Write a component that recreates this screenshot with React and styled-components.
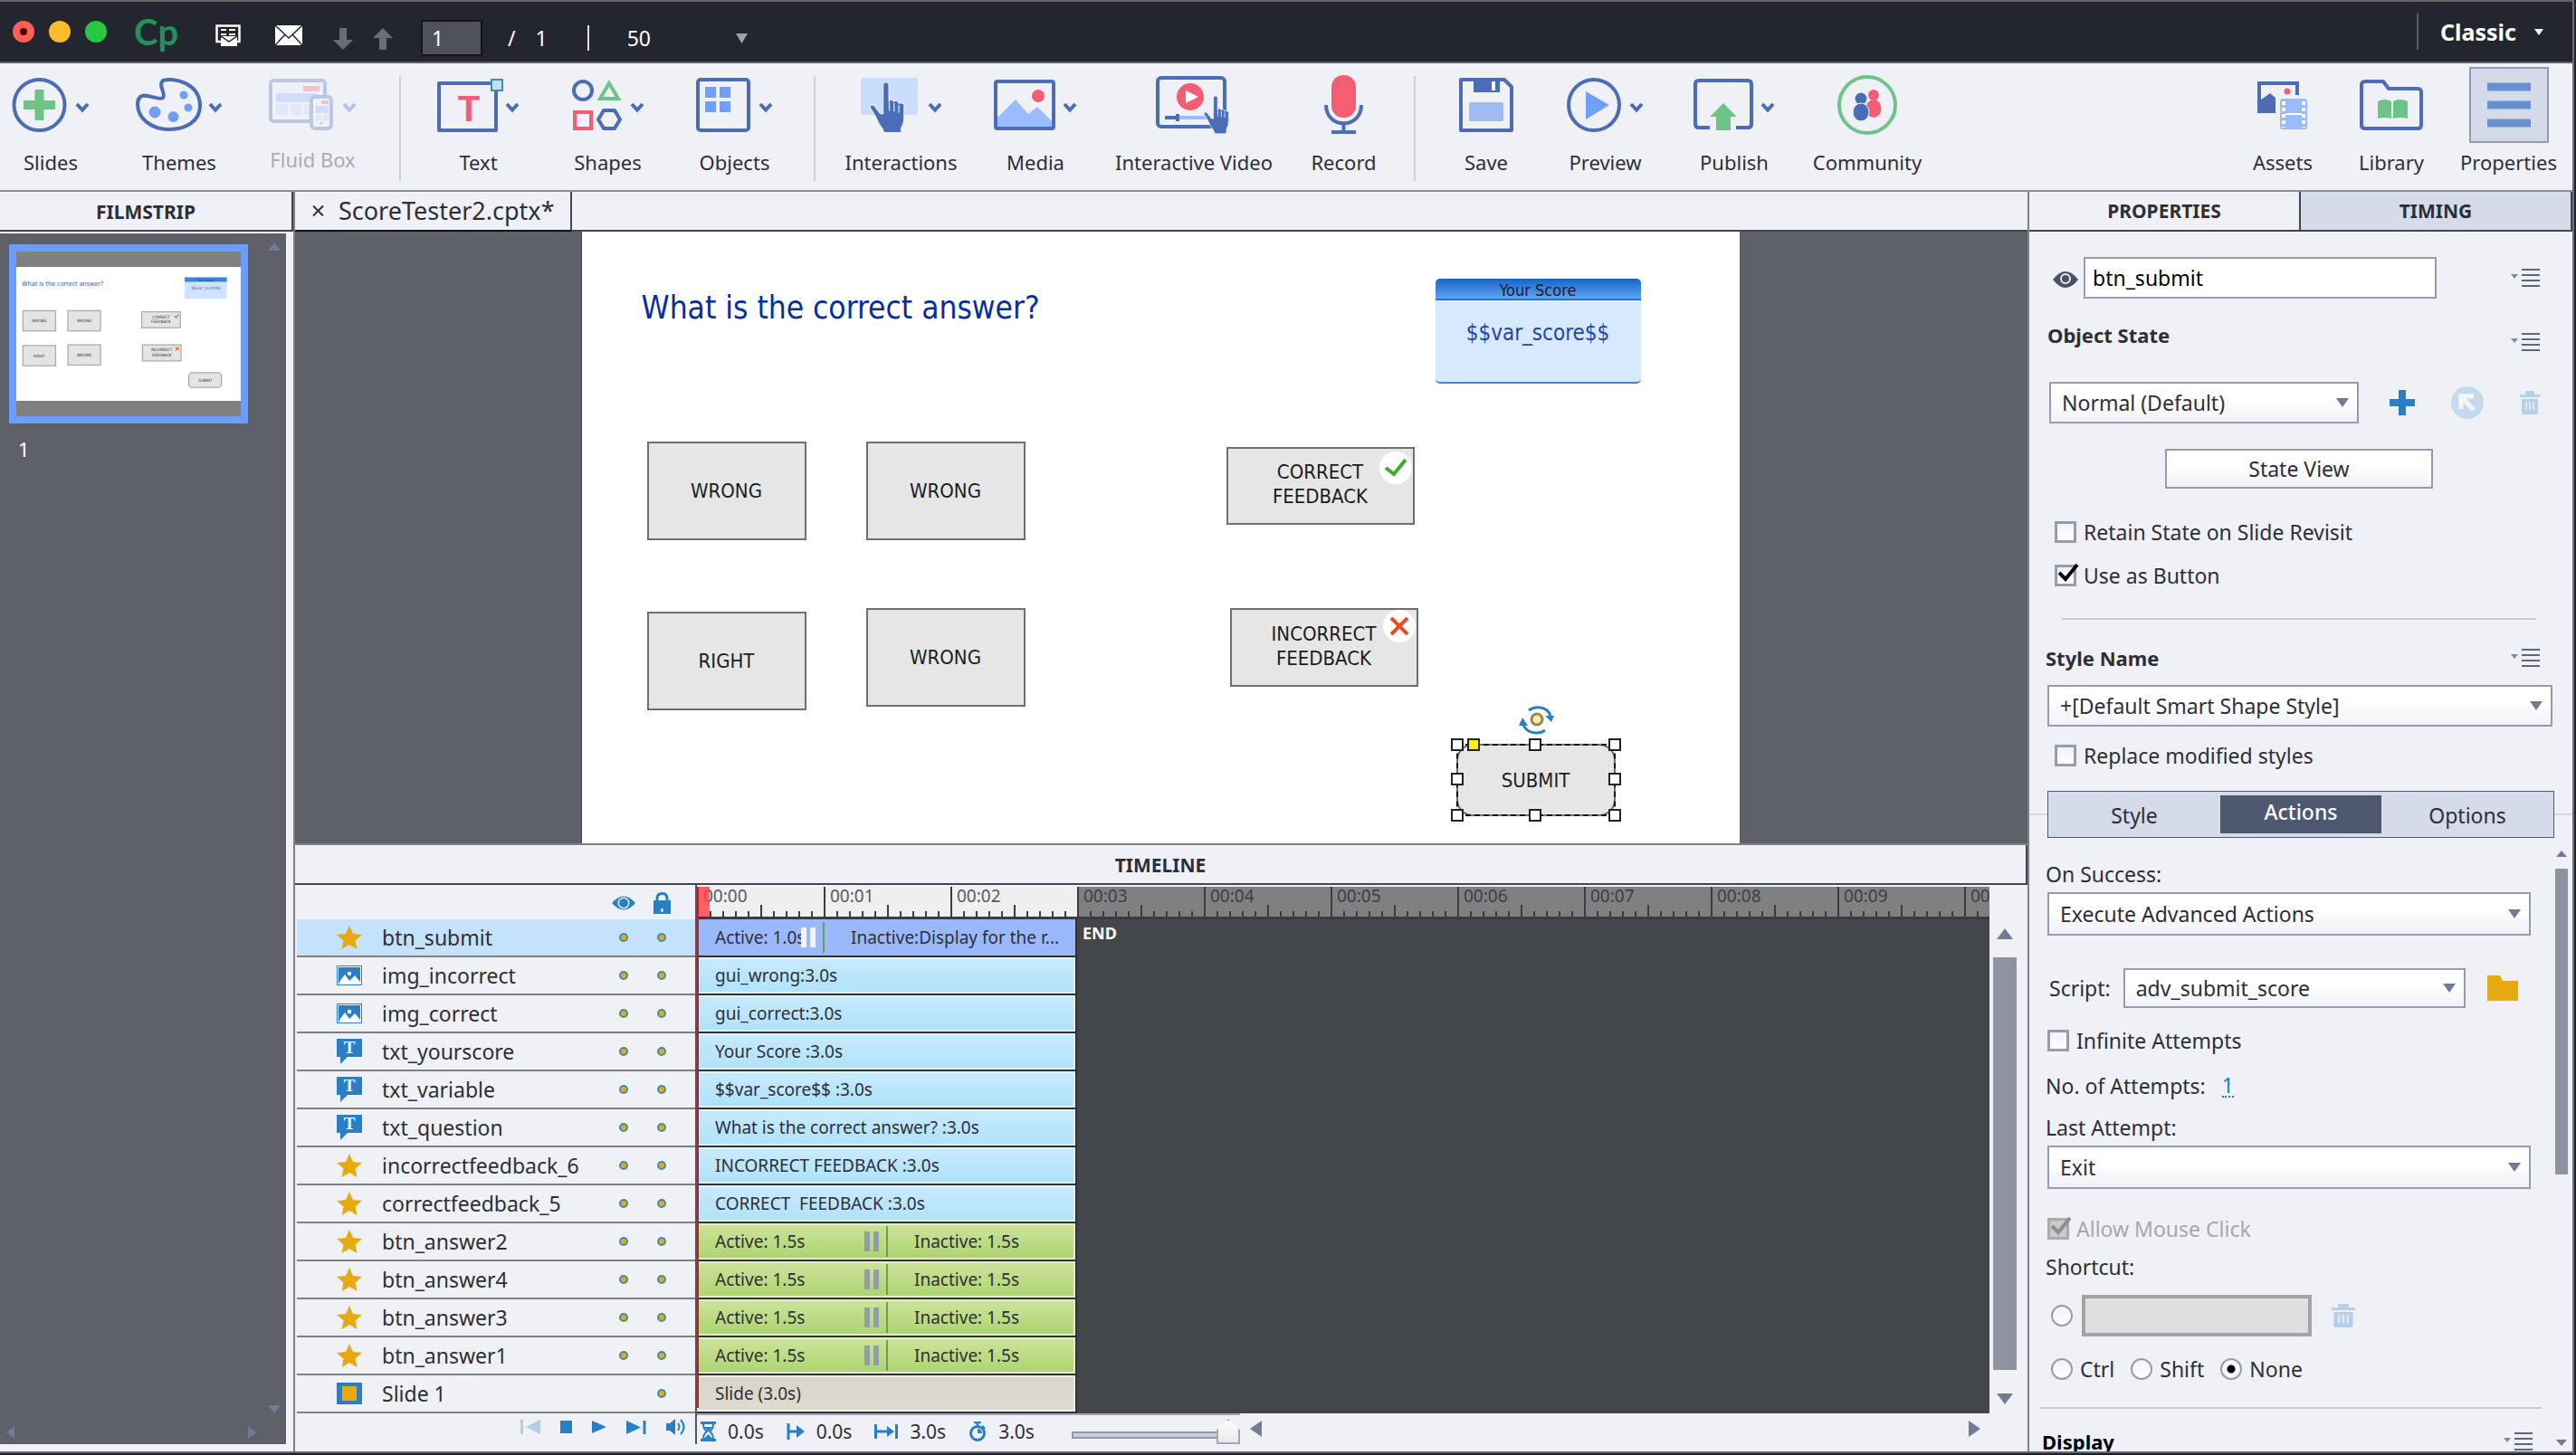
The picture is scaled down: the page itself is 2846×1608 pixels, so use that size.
import React from "react";
import styled, { createGlobalStyle, css } from "styled-components";

const ui = `"Noto Sans", "Open Sans", sans-serif`;
const stageFont = `"DejaVu Sans Condensed", "DejaVu Sans", sans-serif`;

const c = {
  page: "#f0f1f7",
  dark: "#24262f",
  pane: "#5d6068",
  line: "#808082",
  darkLine: "#44464f",
  ink: "#2e2f35",
  field: "#969bae",
  blue: "#4a6db5",
  soft: "#6f9ff9",
  green: "#6ec487",
  red: "#f45d74",
  link: "#2a7fc4",
  gold: "#e6a90f",
  arrow: "#727a94",
};

const GlobalStyle = createGlobalStyle`
  * { box-sizing: border-box; }
  body { margin: 0; background: ${c.dark}; font-family: ${ui}; color: ${c.ink}; overflow: hidden; }
  button, input, select { font: inherit; color: inherit; margin: 0; }
  button { background: none; border: 0; padding: 0; cursor: pointer; }
  svg { display: block; flex: none; }
`;

/* ---------- window ---------- */

const Window = styled.div`
  display: flex;
  flex-direction: column;
  height: 100vh;
  border-top: 2px solid #63645f;
  border-right: 2px solid #6b6c6b;
  border-bottom: 2px solid #1d1f29;
  background: ${c.page};
  margin-right: 2px;
`;

const TitleBar = styled.header`
  display: flex;
  align-items: center;
  height: 68px;
  flex: none;
  padding-left: 14px;
  background: ${c.dark};
  border-bottom: 2px solid #5f6264;
  color: #fff;
  font-size: 23px;
`;

const Lights = styled.div`
  display: flex;
  gap: 16px;
`;

const Light = styled.button`
  width: 24px;
  height: 24px;
  border-radius: 50%;
  background: ${(p) => p.$color};
  display: grid;
  place-items: center;
  ${(p) =>
    p.$dot &&
    css`
      &::after {
        content: "";
        width: 8px;
        height: 8px;
        border-radius: 50%;
        background: #4d0000;
      }
    `}
`;

const Logo = styled.span`
  margin-left: 30px;
  width: 46px;
  font: bold 40px/48px "Liberation Sans Narrow", "Lato", sans-serif;
  color: #23915a;
`;

const TitleTools = styled.div`
  display: flex;
  align-items: center;
  gap: ${(p) => p.$gap}px;
  margin-left: ${(p) => p.$left}px;
  padding-top: ${(p) => p.$drop}px;
`;

const PageInput = styled.input`
  width: 68px;
  height: 40px;
  padding: 0 10px;
  background: #4f525b;
  border: 2px solid #15161b;
  color: #fff;
`;

const Rule = styled.span`
  width: 2px;
  height: 28px;
  background: #e5e5e8;
`;

const ZoomPick = styled.label`
  display: flex;
  align-items: center;
  select {
    appearance: none;
    background: none;
    border: 0;
    width: 120px;
    padding: 0;
    color: #fff;
  }
`;

const Workspace = styled.button`
  display: flex;
  align-items: center;
  gap: 20px;
  height: 40px;
  margin-left: auto;
  padding: 0 32px 0 24px;
  border-left: 2px solid #5b5d66;
  font-size: 25px;
  font-weight: bold;
  color: #fff;
`;

/* ---------- toolbar ---------- */

const Toolbar = styled.nav`
  display: flex;
  flex: none;
  height: 142px;
  padding: 14px 17px 0 0;
  border-bottom: 2px solid #8e8e8e;
`;

const ToolGroup = styled.div`
  display: flex;
  gap: ${(p) => p.$gap}px;
  height: 116px;
  padding: 0 ${(p) => p.$right || 0}px 0 ${(p) => p.$left || 0}px;
  border-right: ${(p) => (p.$last ? "0" : "2px solid #cfd0d4")};
  ${(p) => p.$end && "margin-left: auto;"}
`;

const ToolButton = styled.button`
  display: flex;
  flex-direction: column;
  align-items: center;
  width: ${(p) => p.$w}px;
  font-size: 22px;
  line-height: 28px;
  white-space: nowrap;
  color: ${(p) => (p.disabled ? "#a9acb4" : c.ink)};
`;

const ToolIcon = styled.span`
  display: flex;
  align-items: center;
  justify-content: center;
  gap: ${(p) => p.$gap}px;
  height: 64px;
  margin-bottom: ${(p) => (p.$up ? 14 : 17)}px;
`;

const ChevronBox = styled.span`
  padding-top: 6px;
  opacity: ${(p) => (p.$faded ? 0.35 : 1)};
`;

const ActiveIcon = styled.span`
  display: grid;
  place-items: center;
  width: 88px;
  height: 84px;
  margin: -10px 0 7px;
  background: #d3dae8;
  border: 2px solid ${c.field};
`;

/* ---------- columns ---------- */

const Main = styled.main`
  display: grid;
  grid-template-columns: 324px minmax(0, 1fr) 602px;
  flex: 1;
  min-height: 0;
  border-bottom: 2px solid #66676a;
`;

const Column = styled.section`
  display: flex;
  flex-direction: column;
  min-width: 0;
  min-height: 0;
  overflow: hidden;
`;

const Center = styled(Column)`
  border-left: 2px solid ${c.line};
`;

const PanelTitle = styled.h2`
  margin: 0;
  flex: none;
  height: 44px;
  line-height: 44px;
  text-align: center;
  font-size: 21px;
  font-weight: bold;
  border-right: 2px solid ${c.darkLine};
  border-bottom: 2px solid ${c.darkLine};
`;

const Filmstrip = styled.div`
  display: flex;
  flex-direction: column;
  flex: 1;
  margin: 2px 8px 8px 0;
  padding: 10px 6px 6px 7px;
  background: ${c.pane};
`;

const FilmTop = styled.div`
  display: flex;
  justify-content: space-between;
  align-items: flex-start;
  flex: 1;
`;

const FilmItem = styled.figure`
  margin: 2px 0 0 3px;
  figcaption {
    margin: 14px 0 0 10px;
    font-size: 22px;
    line-height: 28px;
    color: #fff;
  }
`;

const ThumbFrame = styled.div`
  width: 264px;
  padding: 17px 0;
  border: 8px solid #6c9dfd;
  background: #808080;
`;

const FilmBottom = styled.div`
  display: flex;
  justify-content: space-between;
  padding-right: 27px;
`;

const FilmDown = styled.div`
  display: flex;
  justify-content: flex-end;
  margin-bottom: 14px;
`;

/* ---------- document ---------- */

const DocTabs = styled.div`
  display: flex;
  flex: none;
  height: 44px;
  border-bottom: 2px solid ${c.darkLine};
`;

const DocTab = styled.div`
  display: flex;
  align-items: center;
  gap: 16px;
  height: 44px;
  padding: 0 17px 0 19px;
  border-right: 2px solid ${c.darkLine};
  border-bottom: 2px solid #101114;
  font-size: 27px;
  line-height: 42px;
`;

const Stage = styled.div`
  display: flex;
  justify-content: center;
  flex: 1;
  min-height: 0;
  padding-right: 3px;
  overflow: hidden;
  background: ${c.pane};
`;

const Slide = styled.div`
  position: relative;
  width: 1280px;
  flex: none;
  background: #fff;
  border-left: 1px solid #45464b;
  font-family: ${stageFont};
  color: #1c1c1c;
`;

const Placed = styled.div`
  position: absolute;
  left: ${(p) => p.$x}px;
  top: ${(p) => p.$y}px;
`;

const Question = styled(Placed)`
  font-size: 35px;
  line-height: 44px;
  white-space: nowrap;
  color: #062e9e;
`;

const Shape = styled(Placed)`
  display: flex;
  flex-direction: column;
  align-items: center;
  justify-content: center;
  width: ${(p) => p.$w}px;
  height: ${(p) => p.$h}px;
  padding-bottom: ${(p) => (p.$lift ? 4 : 0)}px;
  background: #e6e6e6;
  border: 2px solid #6f6f6f;
  border-radius: ${(p) => p.$round || 0}px;
  font-size: 22px;
  line-height: 27px;
  text-align: center;
`;

const Badge = styled(Placed)`
  display: grid;
  place-items: center;
  width: 36px;
  height: 36px;
  border-radius: 50%;
  background: #fff;
`;

const ScoreCard = styled(Placed)`
  width: 227px;
  height: 116px;
  border-radius: 5px;
  border-bottom: 2px solid #3f84d6;
  background: #d6e9fe;
  text-align: center;
  overflow: hidden;
`;

const ScoreHead = styled.div`
  height: 24px;
  font-size: 18px;
  line-height: 26px;
  background: linear-gradient(#1763c6, #5ea4f6);
  border-bottom: 2px solid #2a6fd0;
`;

const ScoreValue = styled.div`
  margin-top: 20px;
  font-size: 24px;
  line-height: 32px;
  color: #2442b0;
`;

const Handle = styled(Placed)`
  width: 14px;
  height: 14px;
  margin: -7px 0 0 -7px;
  border: 2px solid #222;
  background: ${(p) => p.$fill || "#fff"};
`;

const Marquee = styled(Placed)`
  width: 176px;
  height: 80px;
  border: 2px dashed #111;
`;

/* ---------- timeline ---------- */

const Timeline = styled.section`
  display: flex;
  flex-direction: column;
  flex: none;
  border-top: 2px solid ${c.line};
`;

const TimelineBody = styled.div`
  display: grid;
  grid-template-columns: 444px minmax(0, 1fr) 42px;
`;

const Layers = styled.div`
  padding-left: 2px;
  border-right: 2px solid #55565c;
`;

const layerGrid = css`
  display: grid;
  grid-template-columns: 28px 1fr 42px 42px;
  column-gap: 0;
  align-items: center;
  padding: 0 16px 0 44px;
`;

const LayerHead = styled.div`
  ${layerGrid}
  height: 38px;
  justify-items: center;
  padding-top: 2px;
`;

const LayerRow = styled.div`
  ${layerGrid}
  height: 42px;
  border-bottom: 2px solid ${c.line};
  background: ${(p) => (p.$on ? "#c4e2f9" : "transparent")};
  font-size: 23px;
  line-height: 40px;
  span {
    padding-left: 22px;
  }
`;

const Dot = styled.button`
  justify-self: center;
  width: 10px;
  height: 10px;
  border-radius: 50%;
  border: 2px solid #3f8cb8;
  background: ${c.gold};
`;

const Tracks = styled.div`
  position: relative;
  padding-top: 2px;
  overflow-x: clip;
`;

const Ruler = styled.div`
  display: flex;
  height: 36px;
  overflow-x: clip;
  border-bottom: 3px solid #3b3c3f;
`;

const Second = styled.div`
  flex: none;
  width: 140px;
  padding-left: 5px;
  font-size: 19px;
  line-height: 20px;
  color: ${(p) => (p.$past ? "#3e3f42" : "#5a5a5c")};
  border-left: 2px solid #3b3c3f;
  background: linear-gradient(#3b3c3f, #3b3c3f) 68px 100% / 2px 13px no-repeat,
    repeating-linear-gradient(90deg, transparent 0 12px, #3b3c3f 12px 14px) 0 100% / 138px 6px no-repeat,
    ${(p) => (p.$past ? "#808082" : "#efefef")};
`;

const PlayHead = styled.div`
  position: absolute;
  left: 0;
  top: 2px;
  width: 14px;
  height: 33px;
  background: rgba(255, 60, 66, 0.8);
`;

const PlayLine = styled.div`
  position: absolute;
  left: 0;
  top: 2px;
  bottom: 6px;
  width: 2px;
  background: #b3222a;
`;

const LaneArea = styled.div`
  display: flex;
  background: #44474a;
`;

const Lanes = styled.div`
  width: 420px;
  flex: none;
  border-right: 2px solid #303236;
`;

const fills = {
  sel: "#9ab9fd",
  blue: "linear-gradient(#c9eafe, #aee2fa)",
  green: "linear-gradient(#cde39c, #add46f)",
  sand: "linear-gradient(#d8d4ca, #dedbd1)",
};
const rims = { sel: "#9ab9fd", blue: "#dff3fd", green: "#e3f0c6", sand: "#ecebe6" };

const Lane = styled.div`
  display: flex;
  height: 42px;
  border-bottom: 2px solid #303236;
  background: ${(p) => fills[p.$kind]};
  box-shadow: inset 0 0 0 2px ${(p) => rims[p.$kind]};
  font-size: 19px;
  line-height: 38px;
  white-space: pre;
`;

const Segment = styled.div`
  display: flex;
  align-items: center;
  width: ${(p) => (p.$w ? p.$w + "px" : "auto")};
  padding-left: ${(p) => p.$pad || 20}px;
  span {
    flex: 1;
    overflow: hidden;
  }
`;

const Pause = styled.i`
  width: 16px;
  height: 22px;
  border: solid ${(p) => p.$color};
  border-width: 0 6px;
`;

const SegmentEnd = styled.i`
  width: 2px;
  height: 34px;
  margin-left: 8px;
  background: #6f9f4a;
`;

const EndMark = styled.strong`
  padding: 3px 0 0 6px;
  font-size: 18px;
  line-height: 24px;
  color: #fff;
`;

const SideScroll = styled.div`
  display: flex;
  flex-direction: column;
  align-items: center;
  padding: 48px 10px 10px 2px;
`;

const Thumb = styled.div`
  width: ${(p) => p.$w}px;
  margin: ${(p) => p.$gap};
  flex: ${(p) => (p.$h ? "none" : 1)};
  height: ${(p) => (p.$h ? p.$h + "px" : "auto")};
  background: #8f92a0;
`;

const Footer = styled.div`
  display: flex;
  height: 42px;
`;

const Transport = styled.div`
  display: flex;
  align-items: center;
  justify-content: flex-end;
  gap: 22px;
  width: 444px;
  height: 34px;
  padding: 0 11px 4px 0;
  border-right: 2px solid #55565c;
`;

const Times = styled.div`
  display: flex;
  align-items: center;
  width: 600px;
  height: 38px;
  border-top: 2px solid #a5a8aa;
  padding-left: 4px;
  font-size: 21px;
  gap: 25px;
`;

const Time = styled.span`
  display: flex;
  align-items: center;
  gap: 13px;
`;

const Range = styled.input`
  appearance: none;
  margin-left: auto;
  width: 186px;
  height: 28px;
  background: linear-gradient(#c9cfe2, #c9cfe2) 2px 16px / 160px 4px no-repeat,
    linear-gradient(#9198ae, #9198ae) 0 14px / 164px 8px no-repeat;
  &::-webkit-slider-thumb {
    appearance: none;
    width: 26px;
    height: 28px;
    background: linear-gradient(#fff, #e8e8ea);
    border: 2px solid #a5a7ad;
    clip-path: polygon(50% 0, 100% 45%, 100% 100%, 0 100%, 0 45%);
  }
`;

const HScroll = styled.div`
  display: flex;
  justify-content: space-between;
  flex: 1;
  padding: 8px 52px 0 11px;
`;

/* ---------- properties ---------- */

const Side = styled(Column)`
  border-left: 2px solid ${c.line};
`;

const SideTabs = styled.div`
  display: grid;
  grid-template-columns: 1fr 1fr;
  flex: none;
  height: 44px;
  border-bottom: 2px solid ${c.darkLine};
`;

const SideTab = styled.button`
  font-size: 21px;
  font-weight: bold;
  background: ${(p) => (p.$off ? "#d6dbe9" : "transparent")};
  border-right: 2px solid ${c.darkLine};
`;

const Line = styled.div`
  display: flex;
  align-items: center;
  justify-content: ${(p) => p.$pack || "flex-start"};
  gap: ${(p) => p.$gap || 0}px;
  flex: none;
  height: ${(p) => p.$h || 28}px;
  margin-top: ${(p) => p.$top || 0}px;
  padding: 0 ${(p) => p.$right || 0}px 0 ${(p) => (p.$left === undefined ? 20 : p.$left)}px;
  font-size: 23px;
  line-height: 28px;
  white-space: nowrap;
`;

const StateTools = styled.span`
  display: flex;
  align-items: center;
  gap: 40px;
`;

const Heading = styled.h3`
  margin: 0;
  font-size: 22px;
  line-height: 28px;
  align-self: flex-start;
  color: ${(p) => p.$color || c.ink};
`;

const MenuButton = styled.button`
  margin-left: auto;
  align-self: ${(p) => (p.$low ? "flex-end" : "center")};
`;

const TextInput = styled.input`
  width: ${(p) => p.$w}px;
  height: 46px;
  padding: 0 8px;
  background: #fff;
  color: #000;
  border: 2px solid ${c.field};
  &:disabled {
    background: #dedfdf;
    border: 4px solid #a3a5a5;
  }
`;

const SelectBox = styled.span`
  position: relative;
  display: block;
  width: ${(p) => (p.$w ? p.$w + "px" : "100%")};
  height: 100%;
  select {
    appearance: none;
    width: 100%;
    height: 100%;
    padding: 0 40px 0 12px;
    border: 2px solid ${c.field};
    border-radius: 0;
    background: linear-gradient(#fff 40%, #f1f2f8);
  }
  svg {
    position: absolute;
    right: 11px;
    top: calc(50% - 5px);
    pointer-events: none;
  }
`;

const PushButton = styled.button`
  width: 296px;
  height: 44px;
  border: 2px solid ${c.field};
  background: linear-gradient(#fff 40%, #f1f2f8);
`;

const Choice = styled.label`
  position: relative;
  display: flex;
  align-items: center;
  gap: 8px;
  line-height: 24px;
  color: ${(p) => (p.$off ? "#a6a8ae" : c.ink)};
  input {
    appearance: none;
    width: 24px;
    height: 24px;
    flex: none;
    border: 3px solid ${(p) => (p.$off ? "#a9abab" : c.field)};
    background: ${(p) => (p.$off ? "#c9cacb" : "linear-gradient(#f2f3f8, #fff)")};
  }
  input[type="radio"] {
    border-width: 2px;
    border-radius: 50%;
  }
  input[type="radio"]:checked {
    background: radial-gradient(circle, #000 0 4px, #fafafd 5px);
  }
  svg {
    position: absolute;
    left: 4px;
    top: -2px;
    pointer-events: none;
  }
`;

const Divider = styled.hr`
  flex: none;
  height: 2px;
  width: auto;
  border: 0;
  background: #c9cbd3;
  margin: ${(p) => p.$m};
`;

const ModeWrap = styled.div`
  flex: none;
  margin-top: 27px;
  padding: 0 20px;
  background: linear-gradient(#d6d8de, #d6d8de) 0 25px / 100% 2px no-repeat;
`;

const ModeTabs = styled.div`
  display: grid;
  grid-template-columns: 190px 178px 1fr;
  height: 52px;
  padding: 4px 0;
  border: 1px solid #4e5870;
  background: #d6dbea;
  font-size: 23px;
  button {
    padding-top: 2px;
  }
  button[aria-selected="true"] {
    background: #4e5870;
    color: #fff;
    padding: 0 0 6px;
    font-weight: 500;
  }
`;

const Scroller = styled.div`
  display: flex;
  flex: 1;
  min-height: 0;
`;

const ScrollContent = styled.div`
  display: flex;
  flex-direction: column;
  flex: 1;
  min-width: 0;
  overflow: hidden;
`;

const PanelScroll = styled.div`
  display: flex;
  flex-direction: column;
  align-items: center;
  justify-content: space-between;
  width: 22px;
  padding: 14px 2px 6px 0;
  > div {
    display: flex;
    flex-direction: column;
    align-items: center;
  }
`;

const Attempts = styled.a`
  margin-left: 18px;
  line-height: 24px;
  color: #1580d0;
  text-decoration: none;
  border-bottom: 2px dotted #1580d0;
`;

/* ---------- icons ---------- */

const paths = {
  up: "M0 1L0.5 0L1 1Z",
  down: "M0 0H1L0.5 1Z",
  left: "M1 0V1L0 0.5Z",
  right: "M0 0L1 0.5L0 1Z",
};
const Tri = ({ dir = "down", w = 14, h = 10, color = c.arrow }) => (
  <svg width={w} height={h} viewBox="0 0 1 1" preserveAspectRatio="none">
    <path d={paths[dir]} fill={color} />
  </svg>
);

const Chevron = ({ faded }) => (
  <ChevronBox $faded={faded}>
    <svg width="16" height="12" viewBox="0 0 16 12">
      <path d="M2 2L8 8.500L14 2" fill="none" stroke={c.blue} strokeWidth="4" />
    </svg>
  </ChevronBox>
);

const MenuIcon = () => (
  <svg width="32" height="20" viewBox="0 0 32 20">
    <path d="M0 6H8L4 11Z" fill="#8087a0" />
    <path d="M12 1H32M12 7H32M12 13H32M12 19H32" stroke="#5e6682" strokeWidth="2" />
  </svg>
);

const Trash = ({ w = 22 }) => (
  <svg width={w} height="26" viewBox="0 0 22 26" preserveAspectRatio="none">
    <path d="M0 4H6V0H16V4H22V7H0Z" fill="#b5d0e8" />
    <path d="M2 9H20V24Q20 26 18 26H4Q2 26 2 24Z" fill="#b5d0e8" />
    <path d="M7 12V21M11 12V21M15 12V21" stroke={c.page} strokeWidth="1.500" />
  </svg>
);

const Tick = ({ color = "#000" }) => (
  <svg width="24" height="22" viewBox="0 0 24 22">
    <path d="M1 11L8 18L21 2" fill="none" stroke={color} strokeWidth="4" />
  </svg>
);

const Hand = ({ x = 0, y = 0, s = 1 }) => (
  <g transform={`translate(${x} ${y}) scale(${s})`}>
    <path
      d="M14 3Q14 0 17 0T20 3V20Q20 18 22.500 18T25 21Q25 19 28 19.500T30.500 23Q31 21 34 22T36 26V36Q36 44 33 48V52Q33 55 30 55H18Q15 55 14 50Q9 44 6 36L0 26Q1 22 5 25L11 33H14Z"
      fill={c.blue}
      stroke="#eaf1ff"
      strokeWidth="1"
    />
    <path d="M20.500 20V30M25.500 22V31M30.500 24V32" stroke="#dbe7ff" strokeWidth="1.200" />
  </g>
);

const stroke = { fill: "none", stroke: c.blue, strokeWidth: 4, strokeLinejoin: "round" };

const icons = {
  slides: (
    <svg width="61" height="60" viewBox="0 0 61 60">
      <circle cx="30.500" cy="30" r="28" {...stroke} />
      <path d="M25.500 13H35.500V25H48V35H35.500V47H25.500V35H13V25H25.500Z" fill={c.green} />
    </svg>
  ),
  themes: (
    <svg width="73" height="60" viewBox="0 0 73 60">
      <path d="M5 21C12 16 25 26 30 22C34 18 24 8 30 3C42 -1 71 6 71 31C71 48 55 57 37 57C16 57 2 44 2 29C2 25 3 23 5 21Z" {...stroke} />
      <g fill={c.soft}>
        <circle cx="53" cy="19" r="4.500" />
        <circle cx="58" cy="33" r="4.500" />
        <circle cx="41.500" cy="43" r="6" />
        <circle cx="21" cy="38" r="6.500" />
      </g>
    </svg>
  ),
  fluid: (
    <svg width="72" height="58" viewBox="0 0 72 58">
      <rect x="2" y="2" width="60" height="45" rx="3" fill="none" stroke="#bcc7e2" strokeWidth="4" />
      <rect x="38" y="8" width="18" height="6" fill="#f2c0cb" />
      <rect x="8" y="16" width="46" height="10" fill="#cfddf9" />
      <path d="M8 28H21V40H8ZM24 28H36V40H24ZM39 28H46V40H39Z" fill="#e0e8f8" />
      <rect x="47" y="20" width="22" height="35" rx="4" fill={c.page} stroke="#bcc7e2" strokeWidth="4" />
      <rect x="58" y="24" width="8" height="4" fill="#f2c0cb" />
      <rect x="52" y="30" width="14" height="8" fill="#cfddf9" />
      <path d="M52 40H58V46H52ZM60 40H66V46H60Z" fill="#e0e8f8" />
      <circle cx="58" cy="49" r="1.500" fill="#bcc7e2" />
    </svg>
  ),
  text: (
    <svg width="73" height="60" viewBox="0 0 73 60">
      <rect x="2" y="6" width="63" height="52" {...stroke} />
      <rect x="60" y="2" width="12" height="12" fill="#bfe2fa" stroke="#4d86b0" strokeWidth="2" />
      <text x="35" y="48" fontFamily="Liberation Sans, sans-serif" fontWeight="bold" fontSize="40" textAnchor="middle" fill={c.red}>
        T
      </text>
    </svg>
  ),
  shapes: (
    <svg width="55" height="56" viewBox="0 0 55 56">
      <circle cx="12" cy="12" r="10" {...stroke} />
      <path d="M41 4L51 21H31Z" fill="none" stroke={c.green} strokeWidth="4" />
      <rect x="3" y="36" width="18" height="18" fill="none" stroke={c.red} strokeWidth="4" />
      <path d="M35 34H47L53 44L47 54H35L29 44Z" {...stroke} />
    </svg>
  ),
  objects: (
    <svg width="60" height="60" viewBox="0 0 60 60">
      <rect x="2" y="2" width="56" height="56" rx="3" {...stroke} />
      <path d="M10 10H22V22H10ZM26 10H38V22H26ZM10 26H22V38H10ZM26 26H38V38H26Z" fill={c.soft} />
    </svg>
  ),
  interactions: (
    <svg width="63" height="60" viewBox="0 0 63 60">
      <rect width="63" height="41" rx="3" fill="#cbddfd" />
      <Hand x="10" y="5" s="1.050" />
    </svg>
  ),
  media: (
    <svg width="68" height="56" viewBox="0 0 68 56">
      <path d="M4 42L24 22L38 38L48 30L64 46V52H4Z" fill="#9abcff" />
      <rect x="2" y="2" width="64" height="52" rx="2" {...stroke} />
      <circle cx="49" cy="18" r="7" fill={c.red} />
    </svg>
  ),
  video: (
    <svg width="84" height="64" viewBox="0 0 84 64">
      <rect x="2" y="2" width="74" height="54" rx="4" {...stroke} />
      <circle cx="38" cy="23" r="15" fill={c.red} />
      <path d="M33 16V30L47 23Z" fill="#fff" />
      <path d="M24 46H60" stroke="#9abcff" strokeWidth="4" />
      <path d="M10 46H24M24 42V50" stroke={c.blue} strokeWidth="4" />
      <Hand x="53" y="22" s="0.760" />
    </svg>
  ),
  record: (
    <svg width="43" height="66" viewBox="0 0 43 66">
      <rect x="8" y="0" width="27" height="47" rx="13" fill={c.red} />
      <path d="M2 33C2 60 41 60 41 33M21.500 53V62" fill="none" stroke={c.blue} strokeWidth="4" />
      <path d="M8 63H35" stroke={c.blue} strokeWidth="4" />
    </svg>
  ),
  save: (
    <svg width="60" height="60" viewBox="0 0 60 60">
      <path d="M2 2H50L58 10V58H2Z" {...stroke} />
      <path d="M16 2H45V16H16Z" fill={c.blue} />
      <rect x="36" y="4" width="4" height="10" fill="#fff" />
      <rect x="11" y="27" width="38" height="21" rx="2" fill="#a0baf2" />
    </svg>
  ),
  preview: (
    <svg width="60" height="60" viewBox="0 0 60 60">
      <circle cx="30" cy="30" r="28" {...stroke} />
      <path d="M21 15V46L47 30Z" fill={c.soft} />
    </svg>
  ),
  publish: (
    <svg width="66" height="58" viewBox="0 0 66 58">
      <path d="M18 54H6Q2 54 2 50V6Q2 2 6 2H60Q64 2 64 6V50Q64 54 60 54H47" {...stroke} />
      <path d="M33 27L48 42H41V57H25V42H18Z" fill={c.green} />
    </svg>
  ),
  community: (
    <svg width="66" height="66" viewBox="0 0 66 66">
      <circle cx="33" cy="33" r="31" fill="none" stroke={c.green} strokeWidth="4" />
      <circle cx="40" cy="22" r="6" fill={c.red} />
      <ellipse cx="40" cy="37" rx="8.500" ry="10" fill={c.red} />
      <circle cx="26" cy="26" r="6.500" fill={c.blue} />
      <ellipse cx="26" cy="41" rx="9" ry="10" fill={c.blue} stroke={c.page} strokeWidth="1" />
    </svg>
  ),
  assets: (
    <svg width="56" height="54" viewBox="0 0 56 54">
      <path d="M2 34V3H44V16" fill="none" stroke={c.blue} strokeWidth="4" />
      <path d="M0 36V24L14 14L20 19V36Z" fill={c.blue} />
      <circle cx="33" cy="12" r="3.500" fill={c.red} />
      <rect x="25" y="20" width="30" height="34" rx="3" fill="#9abcff" />
      <path d="M29 23V52M51 23V52" stroke="#fff" strokeWidth="4" strokeDasharray="4 3" />
      <path d="M31 37H49" stroke="#fff" strokeWidth="2" />
    </svg>
  ),
  library: (
    <svg width="70" height="56" viewBox="0 0 70 56">
      <path d="M2 6Q2 2 6 2H26L32 10H64Q68 10 68 14V50Q68 54 64 54H6Q2 54 2 50Z" {...stroke} />
      <path d="M20 24Q28 20 35 24V43Q28 41 20 43ZM37 24Q44 20 53 24V43Q44 41 37 43Z" fill={c.green} />
    </svg>
  ),
  properties: (
    <svg width="48" height="50" viewBox="0 0 48 50">
      <path d="M0 5H48M0 25H48M0 45H48" stroke="#6a8fd0" strokeWidth="9" />
    </svg>
  ),
};

const layerIcons = {
  star: (
    <svg width="28" height="26" viewBox="0 0 28 26">
      <path d="M14 0L18 9L28 10L20.500 16.500L22.500 26L14 21L5.500 26L7.500 16.500L0 10L10 9Z" fill={c.gold} />
    </svg>
  ),
  image: (
    <svg width="28" height="22" viewBox="0 0 28 22">
      <rect x="1" y="1" width="26" height="20" fill={c.link} stroke={c.link} strokeWidth="2" />
      <rect x="1.500" y="1.500" width="25" height="19" fill="none" stroke="#fff" />
      <path d="M3 18L9 10L14 17L20 11L26 18V20H3Z" fill="#fff" />
      <circle cx="14" cy="9" r="2.200" fill="#fff" />
    </svg>
  ),
  text: (
    <svg width="28" height="28" viewBox="0 0 28 28">
      <path d="M0 0H28V20H12L4 28V20H0Z" fill={c.link} />
      <text x="14" y="16" fontFamily="Liberation Serif, serif" fontWeight="bold" fontSize="19" textAnchor="middle" fill="#fff">
        T
      </text>
    </svg>
  ),
  slide: (
    <svg width="28" height="24" viewBox="0 0 28 24">
      <rect width="28" height="24" fill={c.link} />
      <rect x="6" y="4" width="16" height="16" fill={c.gold} />
    </svg>
  ),
};

const EyeBlue = () => (
  <svg width="26" height="16" viewBox="0 0 26 16">
    <path d="M0 8Q13 -7 26 8Q13 23 0 8Z" fill={c.link} />
    <circle cx="13" cy="8" r="6.500" fill={c.page} />
    <circle cx="13" cy="8" r="5" fill={c.link} />
  </svg>
);
const Lock = () => (
  <svg width="19" height="24" viewBox="0 0 19 24">
    <path d="M4 10V7Q4 1.500 9.500 1.500T15 7V10" fill="none" stroke={c.link} strokeWidth="3" />
    <rect y="9" width="19" height="15" fill={c.link} />
    <rect x="8.500" y="18" width="2" height="4" fill="#fff" />
  </svg>
);

/* ---------- data ---------- */

const groups = [
  {
    left: 13, right: 47, gap: 51,
    tools: [
      ["Slides", "slides", 86, 9],
      ["Themes", "themes", 96, 7],
      ["Fluid Box", "fluid", 97, 9],
    ],
  },
  {
    left: 40, right: 45, gap: 57,
    tools: [
      ["Text", "text", 91, 2],
      ["Shapes", "shapes", 81, 9],
      ["Objects", "objects", 85, 9],
    ],
  },
  {
    left: 32, right: 41, gap: 40,
    tools: [
      ["Interactions", "interactions", 125, 11],
      ["Media", "media", 92, 8],
      ["Interactive Video", "video", 178],
      ["Record", "record", 73],
    ],
  },
  {
    left: 44, gap: 40, last: true,
    tools: [
      ["Save", "save", 68],
      ["Preview", "preview", 115, 9],
      ["Publish", "publish", 90, 8],
      ["Community", "community", 124],
    ],
  },
];

const shapes = [
  { x: 72, y: 232, w: 176, h: 109, t: ["WRONG"] },
  { x: 314, y: 232, w: 176, h: 109, t: ["WRONG"] },
  { x: 72, y: 420, w: 176, h: 109, t: ["RIGHT"] },
  { x: 314, y: 416, w: 176, h: 109, t: ["WRONG"] },
  { x: 712, y: 238, w: 208, h: 86, t: ["CORRECT", "FEEDBACK"] },
  { x: 716, y: 416, w: 208, h: 87, t: ["INCORRECT", "FEEDBACK"] },
  { x: 966, y: 566, w: 176, h: 80, t: ["SUBMIT"], round: 18 },
];

const handles = [
  [967, 567], [1053, 567], [1141, 567], [967, 605], [1141, 605], [967, 645], [1053, 645], [1141, 645],
];

const layers = [
  ["btn_submit", "star", "sel", "Active: 1.0s", "Inactive:Display for the r...", 141],
  ["img_incorrect", "image", "blue", "gui_wrong:3.0s"],
  ["img_correct", "image", "blue", "gui_correct:3.0s"],
  ["txt_yourscore", "text", "blue", "Your Score :3.0s"],
  ["txt_variable", "text", "blue", "$$var_score$$ :3.0s"],
  ["txt_question", "text", "blue", "What is the correct answer? :3.0s"],
  ["incorrectfeedback_6", "star", "blue", "INCORRECT FEEDBACK :3.0s"],
  ["correctfeedback_5", "star", "blue", "CORRECT  FEEDBACK :3.0s"],
  ["btn_answer2", "star", "green", "Active: 1.5s", "Inactive: 1.5s", 211],
  ["btn_answer4", "star", "green", "Active: 1.5s", "Inactive: 1.5s", 211],
  ["btn_answer3", "star", "green", "Active: 1.5s", "Inactive: 1.5s", 211],
  ["btn_answer1", "star", "green", "Active: 1.5s", "Inactive: 1.5s", 211],
  ["Slide 1", "slide", "sand", "Slide (3.0s)"],
];

const seconds = Array.from({ length: 11 }, (_, i) => `00:${String(i).padStart(2, "0")}`);

/* ---------- parts ---------- */

const Tool = ({ label, icon, w, gap }) => (
  <ToolButton $w={w} disabled={icon === "fluid"}>
    <ToolIcon $up={icon === "fluid"} $gap={gap || 0}>
      {icons[icon]}
      {gap && <Chevron faded={icon === "fluid"} />}
    </ToolIcon>
    {label}
  </ToolButton>
);

const Select = ({ id, value, w, label }) => (
  <SelectBox $w={w}>
    <select id={id} aria-label={label} defaultValue={value}>
      <option>{value}</option>
    </select>
    <Tri w={14} h={10} />
  </SelectBox>
);

const Check = ({ label, checked, off }) => (
  <Choice $off={off}>
    <input type="checkbox" defaultChecked={checked} disabled={off} />
    {checked && <Tick color={off ? "#8d8f90" : "#000"} />}
    {label}
  </Choice>
);

const Thumbnail = () => (
  <svg width="248" height="148" viewBox="36 -4 1210 722" fontFamily={`"DejaVu Sans Condensed", "DejaVu Sans", sans-serif`}>
    <rect x="36" y="-4" width="1210" height="722" fill="#fff" />
    <text x="67" y="97" fontSize="35" fill="#3a55b5">What is the correct answer?</text>
    <rect x="944" y="52" width="227" height="116" fill="#cfe4fc" />
    <rect x="944" y="52" width="227" height="24" fill="#3a84dc" />
    <text x="1058" y="72" fontSize="18" textAnchor="middle" fill="#16386b">Your Score</text>
    <text x="1058" y="120" fontSize="24" textAnchor="middle" fill="#4a68c0">$$var_score$$</text>
    {shapes.map((s, i) => (
      <g key={i}>
        <rect x={s.x} y={s.y} width={s.w} height={s.h} rx={s.round || 0} fill="#e4e4e4" stroke="#a9a9a9" strokeWidth="6" />
        {s.t.map((t, k) => (
          <text key={t} x={s.x + s.w / 2} y={s.y + s.h / 2 + (s.t.length > 1 ? k * 27 - 9 : 8)} fontSize="22" textAnchor="middle" fill="#333">
            {t}
          </text>
        ))}
      </g>
    ))}
    <path d="M888 260L897 270L912 250" fill="none" stroke="#3fae2a" strokeWidth="5" />
    <path d="M895 428L912 446M912 428L895 446" stroke="#f0481a" strokeWidth="5" />
  </svg>
);

export default function App() {
  return (
    <>
      <GlobalStyle />
      <Window>
        <TitleBar>
          <Lights>
            <Light aria-label="Close" $color="#fe5f57" $dot />
            <Light aria-label="Minimize" $color="#febc2e" />
            <Light aria-label="Full screen" $color="#28c840" />
          </Lights>
          <Logo>Cp</Logo>
          <TitleTools $left={44} $gap={38} $drop={8}>
            <svg width="28" height="24" viewBox="0 0 28 24">
              <path d="M7 19H1.500V1.500H26.500V19H21" fill="none" stroke="#fff" strokeWidth="2.500" />
              <path d="M6 6H12M15 6H22M6 11H12M15 11H22" stroke="#fff" strokeWidth="2" />
              <path d="M6 13H24V24H6Z" fill="#fff" />
              <path d="M6 13L15 19L24 13" fill="none" stroke={c.dark} strokeWidth="1.500" />
            </svg>
            <svg width="30" height="22" viewBox="0 0 30 22">
              <rect width="30" height="22" fill="#fff" />
              <path d="M0 0L15 14L30 0M0 22L11 10M30 22L19 10" fill="none" stroke={c.dark} strokeWidth="1.500" />
            </svg>
          </TitleTools>
          <TitleTools $left={34} $gap={22} $drop={16}>
            <svg width="22" height="24" viewBox="0 0 22 24">
              <path d="M7 0H15V13H22L11 24L0 13H7Z" fill="#6b6d74" />
            </svg>
            <svg width="22" height="24" viewBox="0 0 22 24">
              <path d="M7 24H15V11H22L11 0L0 11H7Z" fill="#6b6d74" />
            </svg>
          </TitleTools>
          <TitleTools $left={31} $gap={20} $drop={14}>
            <PageInput aria-label="Slide number" defaultValue="1" />
            <TitleTools as="span" $left={8} $gap={22} $drop={0}>
              <span>/</span>
              <span>1</span>
            </TitleTools>
            <TitleTools as="span" $left={24} $gap={42} $drop={0}>
              <Rule />
              <ZoomPick>
                <select aria-label="Zoom" defaultValue="50">
                  <option>50</option>
                </select>
                <Tri w={13} h={11} color="#a0a2a8" />
              </ZoomPick>
            </TitleTools>
          </TitleTools>
          <Workspace>
            Classic
            <Tri w={10} h={7} color="#fff" />
          </Workspace>
        </TitleBar>

        <Toolbar>
          {groups.map((g, i) => (
            <ToolGroup key={i} $left={g.left} $right={g.right} $gap={g.gap} $last={g.last}>
              {g.tools.map(([label, icon, w, gap]) => (
                <Tool key={icon} label={label} icon={icon} w={w} gap={gap} />
              ))}
            </ToolGroup>
          ))}
          <ToolGroup $end $last $gap={37}>
            <Tool label="Assets" icon="assets" w={88} />
            <Tool label="Library" icon="library" w={78} />
            <ToolButton $w={107}>
              <ActiveIcon>{icons.properties}</ActiveIcon>
              Properties
            </ToolButton>
          </ToolGroup>
        </Toolbar>

        <Main>
          <Column>
            <PanelTitle>FILMSTRIP</PanelTitle>
            <Filmstrip>
              <FilmTop>
                <FilmItem>
                  <ThumbFrame>
                    <Thumbnail />
                  </ThumbFrame>
                  <figcaption>1</figcaption>
                </FilmItem>
                <Tri dir="up" w={14} h={9} />
              </FilmTop>
              <FilmDown>
                <Tri w={14} h={9} />
              </FilmDown>
              <FilmBottom>
                <Tri dir="left" w={9} h={14} />
                <Tri dir="right" w={9} h={14} />
              </FilmBottom>
            </Filmstrip>
          </Column>

          <Center>
            <DocTabs>
              <DocTab>
                <button aria-label="Close document">
                  <svg width="13" height="12" viewBox="0 0 13 12">
                    <path d="M1 0.500L12 11.500M12 0.500L1 11.500" stroke={c.ink} strokeWidth="2" />
                  </svg>
                </button>
                ScoreTester2.cptx*
              </DocTab>
            </DocTabs>

            <Stage>
              <Slide>
                <Question $x={66} $y={62}>What is the correct answer?</Question>
                <ScoreCard $x={943} $y={52}>
                  <ScoreHead>Your Score</ScoreHead>
                  <ScoreValue>$$var_score$$</ScoreValue>
                </ScoreCard>
                {shapes.map((s, i) => (
                  <Shape key={i} $x={s.x} $y={s.y} $w={s.w} $h={s.h} $round={s.round} $lift={s.t.length > 1}>
                    {s.t.map((t) => (
                      <span key={t}>{t}</span>
                    ))}
                  </Shape>
                ))}
                <Badge $x={881} $y={243}>
                  <svg width="26" height="22" viewBox="0 0 26 22">
                    <path d="M2 11L11 18L24 2" fill="none" stroke="#3fae2a" strokeWidth="4" />
                  </svg>
                </Badge>
                <Badge $x={885} $y={418}>
                  <svg width="20" height="20" viewBox="0 0 20 20">
                    <path d="M1 1L19 19M19 1L1 19" stroke="#f0481a" strokeWidth="4" />
                  </svg>
                </Badge>
                <Placed $x={1035} $y={524}>
                  <svg width="40" height="32" viewBox="0 0 40 32">
                    <path d="M11 5C18 0 31 0 35 11" fill="none" stroke={c.link} strokeWidth="3" />
                    <path d="M29 11H39L36 18Z" fill={c.link} />
                    <path d="M29 27C22 32 9 31 5 21" fill="none" stroke={c.link} strokeWidth="3" />
                    <path d="M0 22H10L4 13Z" fill={c.link} />
                    <circle cx="20" cy="15" r="6" fill="#ffe9a8" stroke="#8f8a52" strokeWidth="3" />
                  </svg>
                </Placed>
                <Marquee $x={966} $y={566} />
                {handles.map(([x, y]) => (
                  <Handle key={`${x}-${y}`} $x={x} $y={y} />
                ))}
                <Handle $x={985} $y={567} $fill="#fff200" />
              </Slide>
            </Stage>

            <Timeline>
              <PanelTitle>TIMELINE</PanelTitle>
              <TimelineBody>
                <Layers>
                  <LayerHead>
                    <i />
                    <i />
                    <EyeBlue />
                    <Lock />
                  </LayerHead>
                  {layers.map(([name, icon]) => (
                    <LayerRow key={name} $on={name === "btn_submit"}>
                      {layerIcons[icon]}
                      <span>{name}</span>
                      {icon === "slide" ? <i /> : <Dot aria-label={`Show ${name}`} />}
                      <Dot aria-label={`Lock ${name}`} />
                    </LayerRow>
                  ))}
                </Layers>
                <Tracks>
                  <Ruler>
                    {seconds.map((label, i) => (
                      <Second key={label} $past={i > 2}>
                        {label}
                      </Second>
                    ))}
                  </Ruler>
                  <LaneArea>
                    <Lanes>
                      {layers.map(([name, , kind, first, second, w]) => (
                        <Lane key={name} $kind={kind}>
                          <Segment $w={w}>
                            <span>{first}</span>
                            {second && <Pause $color={kind === "sel" ? "#f1f5ff" : "#929cab"} />}
                            {second && <SegmentEnd />}
                          </Segment>
                          {second && (
                            <Segment $pad={29}>
                              <span>{second}</span>
                            </Segment>
                          )}
                        </Lane>
                      ))}
                    </Lanes>
                    <EndMark>END</EndMark>
                  </LaneArea>
                  <PlayHead />
                  <PlayLine />
                </Tracks>
                <SideScroll>
                  <Tri dir="up" w={18} h={12} />
                  <Thumb $w={26} $gap="20px 0 26px" />
                  <Tri w={18} h={12} />
                </SideScroll>
              </TimelineBody>
              <Footer>
                <Transport>
                  <button aria-label="To start">
                    <svg width="22" height="16" viewBox="0 0 22 16">
                      <path d="M1.500 0V16" stroke="#b3cfe6" strokeWidth="3" />
                      <path d="M22 0V16L6 8Z" fill="#b3cfe6" />
                    </svg>
                  </button>
                  <button aria-label="Stop">
                    <svg width="13" height="14" viewBox="0 0 13 14">
                      <rect width="13" height="14" fill={c.link} />
                    </svg>
                  </button>
                  <button aria-label="Play">
                    <Tri dir="right" w={16} h={14} color={c.link} />
                  </button>
                  <button aria-label="To end">
                    <svg width="22" height="15" viewBox="0 0 22 15">
                      <path d="M0 0V15L16 7.500Z" fill={c.link} />
                      <path d="M20 0V15" stroke={c.link} strokeWidth="3" />
                    </svg>
                  </button>
                  <button aria-label="Audio">
                    <svg width="21" height="18" viewBox="0 0 21 18">
                      <path d="M0 5H4L10 0V18L4 13H0Z" fill={c.link} />
                      <path d="M13 5Q16 9 13 13M16 1Q23 9 16 17" fill="none" stroke={c.link} strokeWidth="2" />
                    </svg>
                  </button>
                </Transport>
                <Times>
                  <Time>
                    <svg width="17" height="22" viewBox="0 0 17 22">
                      <path d="M0 1.500H17M0 20.500H17" stroke={c.link} strokeWidth="3" />
                      <path d="M3 3Q3 8 7 11Q3 14 3 19H14Q14 14 10 11Q14 8 14 3" fill="none" stroke={c.link} strokeWidth="2" />
                      <path d="M4 6H13L8.500 11ZM4 19L8.500 14L13 19Z" fill={c.link} />
                    </svg>
                    0.0s
                  </Time>
                  <Time>
                    <svg width="20" height="18" viewBox="0 0 20 18">
                      <path d="M2 0V18M2 9H12" stroke={c.link} strokeWidth="3" />
                      <path d="M11 2L20 9L11 16Z" fill={c.link} />
                    </svg>
                    0.0s
                  </Time>
                  <Time>
                    <svg width="26" height="16" viewBox="0 0 26 16">
                      <path d="M1.500 0V16M24.500 0V16M2 8H16" stroke={c.link} strokeWidth="3" />
                      <path d="M14 2L22 8L14 14Z" fill={c.link} />
                    </svg>
                    3.0s
                  </Time>
                  <Time>
                    <svg width="20" height="22" viewBox="0 0 20 22">
                      <circle cx="10" cy="13" r="7.500" fill="none" stroke={c.link} strokeWidth="3" />
                      <path d="M6 1H14M10 1V5M15 5L18 8" stroke={c.link} strokeWidth="2.500" />
                      <path d="M10 8V13H15A5 5 0 0 0 10 8Z" fill={c.link} />
                    </svg>
                    3.0s
                  </Time>
                  <Range type="range" aria-label="Timeline zoom" min="0" max="100" defaultValue="100" />
                </Times>
                <HScroll>
                  <Tri dir="left" w={13} h={18} />
                  <Tri dir="right" w={13} h={18} />
                </HScroll>
              </Footer>
            </Timeline>
          </Center>

          <Side>
            <SideTabs>
              <SideTab>PROPERTIES</SideTab>
              <SideTab $off>TIMING</SideTab>
            </SideTabs>

            <Line $h={46} $top={28} $left={26} $right={36} $gap={6}>
              <svg width="28" height="22" viewBox="0 -4 28 22">
                <path d="M0 9Q14 -9 28 9Q14 27 0 9Z" fill="#4b5163" />
                <circle cx="14" cy="8" r="6" fill="#e6e8f0" />
                <circle cx="14" cy="8" r="4" fill="#4b5163" />
              </svg>
              <TextInput $w={390} aria-label="Object name" defaultValue="btn_submit" />
              <MenuButton aria-label="Object options"><MenuIcon /></MenuButton>
            </Line>
            <Line $h={32} $top={26} $right={36}>
              <Heading>Object State</Heading>
              <MenuButton $low aria-label="State options"><MenuIcon /></MenuButton>
            </Line>
            <Line $h={46} $top={34} $left={22} $right={36} $pack="space-between">
              <Select w={342} value="Normal (Default)" label="Object state" />
              <StateTools>
                <button aria-label="Add state">
                  <svg width="28" height="28" viewBox="0 0 28 28">
                    <path d="M10 0H18V10H28V18H18V28H10V18H0V10H10Z" fill={c.link} />
                  </svg>
                </button>
                <button aria-label="Reset state">
                  <svg width="36" height="36" viewBox="0 0 36 36">
                    <circle cx="18" cy="18" r="18" fill="#c5dbed" />
                    <path d="M11 25V11H25M11 11L25 26" fill="none" stroke="#f3f6fb" strokeWidth="5" />
                  </svg>
                </button>
                <button aria-label="Delete state"><Trash /></button>
              </StateTools>
            </Line>
            <Line $h={44} $top={28} $left={0} $right={4} $pack="center">
              <PushButton>State View</PushButton>
            </Line>
            <Line $h={24} $top={36} $left={28}>
              <Check label="Retain State on Slide Revisit" />
            </Line>
            <Line $h={24} $top={24} $left={28}>
              <Check label="Use as Button" checked />
            </Line>
            <Divider $m="35px 40px 0 36px" />
            <Line $top={28} $left={18} $right={36}>
              <Heading>Style Name</Heading>
              <MenuButton aria-label="Style options"><MenuIcon /></MenuButton>
            </Line>
            <Line $h={46} $top={16} $right={22}>
              <Select value="+[Default Smart Shape Style]" label="Style name" />
            </Line>
            <Line $h={24} $top={20} $left={28}>
              <Check label="Replace modified styles" />
            </Line>
            <ModeWrap>
              <ModeTabs role="tablist">
                <button role="tab" aria-selected="false">Style</button>
                <button role="tab" aria-selected="true">Actions</button>
                <button role="tab" aria-selected="false">Options</button>
              </ModeTabs>
            </ModeWrap>

            <Scroller>
              <ScrollContent>
                <Line $top={26} $left={18}>
                  <label htmlFor="success">On Success:</label>
                </Line>
                <Line $h={48} $top={6} $right={24}>
                  <Select id="success" value="Execute Advanced Actions" />
                </Line>
                <Line $h={44} $top={36} $left={22} $gap={14}>
                  <label htmlFor="script">Script:</label>
                  <Line as="span" $h={44} $left={0} $gap={24}>
                    <Select id="script" w={378} value="adv_submit_score" />
                    <svg width="34" height="28" viewBox="0 0 34 28">
                      <path d="M0 0H14L17 6H34V28H0Z" fill={c.gold} />
                    </svg>
                  </Line>
                </Line>
                <Line $h={24} $top={24}>
                  <Check label="Infinite Attempts" />
                </Line>
                <Line $top={24} $left={18}>
                  No. of Attempts:
                  <Attempts href="#attempts">1</Attempts>
                </Line>
                <Line $top={18} $left={18}>
                  <label htmlFor="last">Last Attempt:</label>
                </Line>
                <Line $h={48} $top={6} $right={24}>
                  <Select id="last" value="Exit" />
                </Line>
                <Line $h={24} $top={32}>
                  <Check label="Allow Mouse Click" checked off />
                </Line>
                <Line $top={16} $left={18}>Shortcut:</Line>
                <Line $h={46} $top={17} $left={24} $gap={10}>
                  <Choice>
                    <input type="radio" name="shortcut" aria-label="Key" />
                  </Choice>
                  <TextInput $w={254} disabled aria-label="Shortcut key" />
                  <Line as="span" $left={12}>
                    <Trash w={26} />
                  </Line>
                </Line>
                <Line $h={24} $top={24} $left={24} $gap={18}>
                  <Choice>
                    <input type="radio" name="shortcut" />
                    Ctrl
                  </Choice>
                  <Choice>
                    <input type="radio" name="shortcut" />
                    Shift
                  </Choice>
                  <Choice>
                    <input type="radio" name="shortcut" defaultChecked />
                    None
                  </Choice>
                </Line>
                <Divider $m="30px 12px 0" />
                <Line $top={22} $left={14} $right={22}>
                  <Heading $color="#000">Display</Heading>
                  <MenuButton aria-label="Display options"><MenuIcon /></MenuButton>
                </Line>
              </ScrollContent>
              <PanelScroll>
                <div>
                  <Tri dir="up" w={12} h={7} />
                  <Thumb $w={14} $h={338} $gap="13px 0" />
                </div>
                <Tri w={12} h={7} />
              </PanelScroll>
            </Scroller>
          </Side>
        </Main>
      </Window>
    </>
  );
}
